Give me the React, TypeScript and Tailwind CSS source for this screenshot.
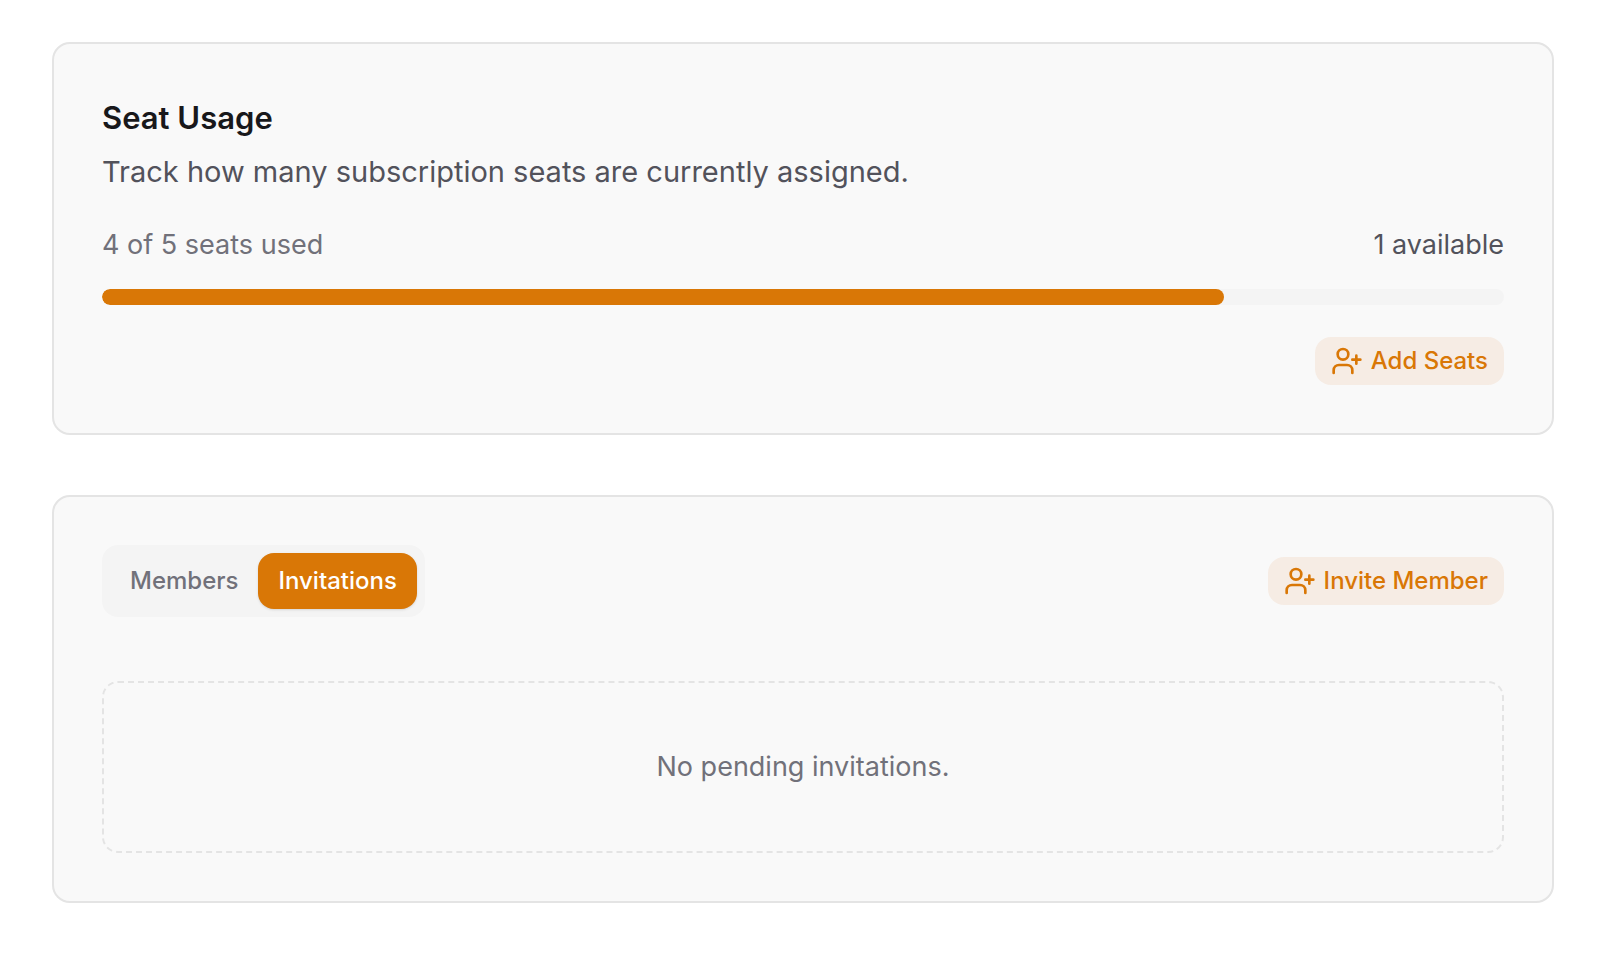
import { useState } from 'react';
import { UserPlus } from 'lucide-react';
import clsx from 'clsx';

type Tab = 'members' | 'invitations';

const TABS: Array<{ id: Tab; label: string }> = [
  { id: 'members', label: 'Members' },
  { id: 'invitations', label: 'Invitations' },
];

const SEATS = { used: 4, total: 5 };

function Card({ children }: { children: React.ReactNode }) {
  return (
    <section className="rounded-[18px] border-2 border-[#e4e4e4] bg-[#f9f9f9] p-12">{children}</section>
  );
}

function ActionButton({ label }: { label: string }) {
  return (
    <button
      type="button"
      className="flex h-12 items-center gap-2 rounded-2xl bg-[#f6ece4] px-4 text-2xl font-medium text-[#d97706]"
    >
      <UserPlus className="size-8" aria-hidden="true" />
      {label}
    </button>
  );
}

function SeatUsage() {
  const percent = (SEATS.used / SEATS.total) * 100;

  return (
    <Card>
      <h2 className="text-[31px] leading-13 font-semibold text-[#18181b]">Seat Usage</h2>
      <p className="mt-1 text-[29px] leading-[47px] text-[#52525b]">
        Track how many subscription seats are currently assigned.
      </p>
      <div className="mt-[30px] flex items-center justify-between text-[27px] leading-10">
        <span className="text-[#71717a]">
          {SEATS.used} of {SEATS.total} seats used
        </span>
        <span className="text-[#52525b]">{SEATS.total - SEATS.used} available</span>
      </div>
      <div className="mt-6 h-4 overflow-hidden rounded-full bg-[#f4f4f4]">
        <div className="h-full rounded-full bg-[#d97706]" style={{ width: `${percent}%` }} />
      </div>
      <div className="mt-8 flex justify-end">
        <ActionButton label="Add Seats" />
      </div>
    </Card>
  );
}

function TeamAccess() {
  const [tab, setTab] = useState<Tab>('invitations');

  return (
    <Card>
      <div className="flex items-center justify-between">
        <div role="tablist" className="flex rounded-2xl bg-[#f4f4f4] p-2">
          {TABS.map((t) => (
            <button
              key={t.id}
              type="button"
              role="tab"
              aria-selected={tab === t.id}
              onClick={() => setTab(t.id)}
              className={clsx(
                'h-14 rounded-2xl px-5 text-2xl font-medium',
                tab === t.id ? 'bg-[#d97706] text-white shadow-sm' : 'text-[#71717a]',
              )}
            >
              {t.label}
            </button>
          ))}
        </div>
        <ActionButton label="Invite Member" />
      </div>
      <div className="mt-16 rounded-2xl border-2 border-dashed border-[#e4e4e4] px-12 py-16 text-center text-[27px] leading-10 text-[#71717a]">
        {tab === 'invitations' ? 'No pending invitations.' : 'No members.'}
      </div>
    </Card>
  );
}

export default function App() {
  return (
    <main className="flex min-h-screen flex-col gap-15 bg-white pt-[42px] pr-[58px] pb-14 pl-[52px] font-['Inter',sans-serif]">
      <SeatUsage />
      <TeamAccess />
    </main>
  );
}
